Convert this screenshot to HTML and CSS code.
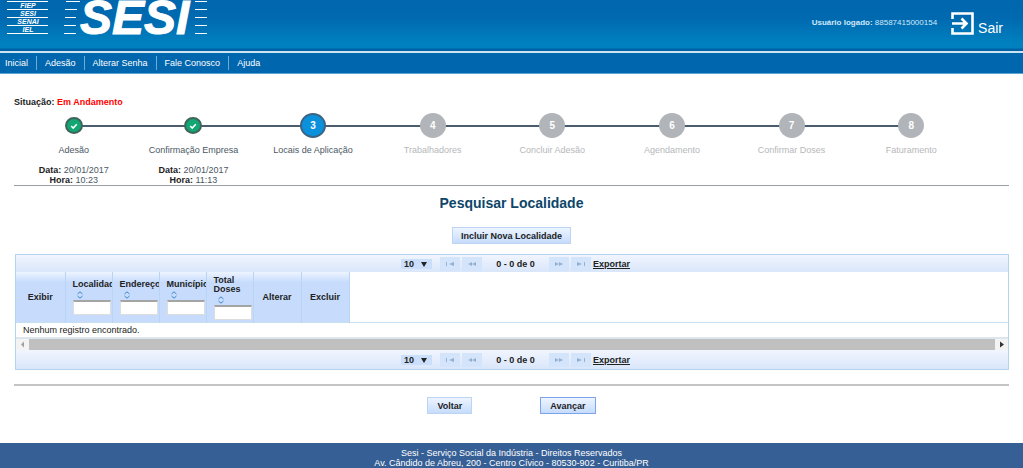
FILE: index.html
```html
<!DOCTYPE html>
<html lang="pt-BR">
<head>
<meta charset="utf-8">
<title>Pesquisar Localidade</title>
<link rel="stylesheet" href="styles.css">
</head>
<body>
<header class="header">
  <svg class="logo" width="210" height="38" viewBox="0 0 210 38" role="img" aria-label="FIEP SESI SENAI IEL">
    <path class="rules" d="M7 1.5h41M7 9.5h41M7 17.5h41M7 25.5h41M7 33.5h41M66 1.5h14M65 9.5h12M65 17.5h11M64 25.5h12M64 33.5h12M195 1.5h12M195 9.5h12M195 17.5h12M195 25.5h12M195 33.5h12"/>
    <g class="logo-small">
      <text x="28" y="8">FIEP</text>
      <text x="28" y="16">SESI</text>
      <text x="28" y="24">SENAI</text>
      <text x="28" y="32">IEL</text>
    </g>
    <text class="logo-big" x="80" y="34">SESI</text>
  </svg>
  <div class="user">
    <span><b>Usuário logado:</b> 88587415000154</span>
    <a class="exit" href="#">
      <svg width="23" height="23" viewBox="0 0 23 23" aria-hidden="true">
        <path d="M1.5 7V1.5H21.500V21.500H1.500V16M1 11.500H15M10.500 6.500L15.500 11.500L10.500 16.500" fill="none" stroke="#fff" stroke-width="2.600"/>
      </svg>
      <span>Sair</span>
    </a>
  </div>
</header>
<nav class="nav">
  <a href="#">Inicial</a><a href="#">Adesão</a><a href="#">Alterar Senha</a><a href="#">Fale Conosco</a><a href="#">Ajuda</a>
</nav>
<main class="main">
  <p class="status">Situação: <span class="red">Em Andamento</span></p>
  <ol class="steps">
    <li class="step done"><span class="dot"><svg width="8" height="8" viewBox="0 0 8 8" aria-hidden="true"><path d="M1.200 4L3.200 6L6.800 2.200" fill="none" stroke="#fff" stroke-width="1.600"/></svg></span><span class="label">Adesão</span><span class="when"><b>Data:</b> 20/01/2017<br><b>Hora:</b> 10:23</span></li>
    <li class="step done"><span class="dot"><svg width="8" height="8" viewBox="0 0 8 8" aria-hidden="true"><path d="M1.200 4L3.200 6L6.800 2.200" fill="none" stroke="#fff" stroke-width="1.600"/></svg></span><span class="label">Confirmação Empresa</span><span class="when"><b>Data:</b> 20/01/2017<br><b>Hora:</b> 11:13</span></li>
    <li class="step current"><span class="dot">3</span><span class="label">Locais de Aplicação</span></li>
    <li class="step"><span class="dot">4</span><span class="label">Trabalhadores</span></li>
    <li class="step"><span class="dot">5</span><span class="label">Concluir Adesão</span></li>
    <li class="step"><span class="dot">6</span><span class="label">Agendamento</span></li>
    <li class="step"><span class="dot">7</span><span class="label">Confirmar Doses</span></li>
    <li class="step"><span class="dot">8</span><span class="label">Faturamento</span></li>
  </ol>
  <h1 class="title">Pesquisar Localidade</h1>
  <div class="center"><button class="btn" type="button">Incluir Nova Localidade</button></div>
  <section class="panel">
    <div class="pager">
      <span class="rows"><select aria-label="Registros por página"><option>10</option></select></span>
      <span class="pair">
        <button type="button" class="pg" aria-label="Primeira"><svg width="8" height="6" viewBox="0 0 8 6"><path d="M0 1h1v4H0zM8 1v4L3 3z"/></svg></button>
        <button type="button" class="pg" aria-label="Anterior"><svg width="8" height="6" viewBox="0 0 8 6"><path d="M4 1v4L0 3zM8 1v4L4 3z"/></svg></button>
      </span>
      <span class="count">0 - 0 de 0</span>
      <span class="pair">
        <button type="button" class="pg" aria-label="Próxima"><svg width="8" height="6" viewBox="0 0 8 6"><path d="M0 1v4L4 3zM4 1v4L8 3z"/></svg></button>
        <button type="button" class="pg" aria-label="Última"><svg width="8" height="6" viewBox="0 0 8 6"><path d="M0 1v4L5 3zM7 1h1v4H7z"/></svg></button>
      </span>
      <a class="export" href="#">Exportar</a>
    </div>
    <table class="grid">
      <colgroup><col class="c-show"><col class="c-f"><col class="c-f"><col class="c-f"><col class="c-f"><col class="c-act"><col class="c-act"><col></colgroup>
      <thead>
        <tr>
          <th>Exibir</th>
          <th class="filter"><label for="f1">Localidade</label><svg class="sort" width="6" height="8" viewBox="0 0 6 8"><path d="M.5 3L3 .8L5.500 3M.5 5L3 7.200L5.500 5"/></svg><input id="f1" type="text"></th>
          <th class="filter"><label for="f2">Endereço</label><svg class="sort" width="6" height="8" viewBox="0 0 6 8"><path d="M.5 3L3 .8L5.500 3M.5 5L3 7.200L5.500 5"/></svg><input id="f2" type="text"></th>
          <th class="filter"><label for="f3">Município</label><svg class="sort" width="6" height="8" viewBox="0 0 6 8"><path d="M.5 3L3 .8L5.500 3M.5 5L3 7.200L5.500 5"/></svg><input id="f3" type="text"></th>
          <th class="filter"><label for="f4">Total<br>Doses</label><svg class="sort" width="6" height="8" viewBox="0 0 6 8"><path d="M.5 3L3 .8L5.500 3M.5 5L3 7.200L5.500 5"/></svg><input id="f4" type="text"></th>
          <th>Alterar</th>
          <th>Excluir</th>
          <td class="rest"></td>
        </tr>
      </thead>
      <tbody><tr><td class="empty" colspan="8">Nenhum registro encontrado.</td></tr></tbody>
    </table>
    <div class="scroll">
      <svg width="13" height="11" viewBox="0 0 13 11"><path d="M8 2.500v6L5 5.500z" fill="#a0a0a0"/></svg>
      <span class="thumb"></span>
      <svg width="13" height="11" viewBox="0 0 13 11"><path d="M5 2.500v6L9 5.500z" fill="#333"/></svg>
    </div>
    <div class="pager bottom">
      <span class="rows"><select aria-label="Registros por página"><option>10</option></select></span>
      <span class="pair">
        <button type="button" class="pg" aria-label="Primeira"><svg width="8" height="6" viewBox="0 0 8 6"><path d="M0 1h1v4H0zM8 1v4L3 3z"/></svg></button>
        <button type="button" class="pg" aria-label="Anterior"><svg width="8" height="6" viewBox="0 0 8 6"><path d="M4 1v4L0 3zM8 1v4L4 3z"/></svg></button>
      </span>
      <span class="count">0 - 0 de 0</span>
      <span class="pair">
        <button type="button" class="pg" aria-label="Próxima"><svg width="8" height="6" viewBox="0 0 8 6"><path d="M0 1v4L4 3zM4 1v4L8 3z"/></svg></button>
        <button type="button" class="pg" aria-label="Última"><svg width="8" height="6" viewBox="0 0 8 6"><path d="M0 1v4L5 3zM7 1h1v4H7z"/></svg></button>
      </span>
      <a class="export" href="#">Exportar</a>
    </div>
  </section>
  <div class="actions">
    <button class="btn" type="button">Voltar</button>
    <button class="btn primary" type="button">Avançar</button>
  </div>
</main>
<footer class="footer">Sesi - Serviço Social da Indústria - Direitos Reservados<br>Av. Cândido de Abreu, 200 - Centro Cívico - 80530-902 - Curitiba/PR</footer>
</body>
</html>
```

FILE: styles.css
```css
* { box-sizing: border-box; }

body {
  margin: 0;
  min-height: 100vh;
  display: flex;
  flex-direction: column;
  overflow-x: hidden;
  background: #fff;
  color: #222;
  font: 9px/10px "Liberation Sans", Arial, sans-serif;
}

button, input, select { font: inherit; margin: 0; }

.header {
  display: flex;
  justify-content: space-between;
  height: 51px;
  background: linear-gradient(#0067ae 0, #0069b0 18px, #0080bf 43px, #0080bf 48px, #0061a5 49px);
  color: #cfe8fa;
}
.logo { flex: none; overflow: visible; }
.rules { stroke: #fff; stroke-width: 1; }
.logo-small { fill: #fff; font: italic bold 7px "Liberation Sans", Arial, sans-serif; text-anchor: middle; }
.logo-big { fill: #fff; stroke: #fff; stroke-width: 1; font: italic bold 48px "Liberation Sans", Arial, sans-serif; }
.user {
  display: flex;
  align-items: center;
  gap: 14px;
  height: 46px;
  padding-right: 20px;
  font-size: 8px;
}
.exit {
  display: flex;
  align-items: center;
  gap: 4px;
  color: #fff;
  font-size: 14px;
  line-height: 16px;
  text-decoration: none;
}
.exit span { padding-top: 9px; }

.nav {
  display: flex;
  align-items: center;
  height: 23px;
  border-top: 2px solid #cbe4f3;
  border-bottom: 1px solid #5aa5d3;
  background: #0066ad;
}
.nav a {
  padding: 0 8px;
  border-left: 1px solid #6eaad3;
  color: #fff;
  line-height: 14px;
  text-decoration: none;
}
.nav a:first-child { padding-left: 5px; border-left: 0; }

.main { flex: 1; padding: 23px 14px 0; }
.status { margin: 0; font-weight: bold; }
.red { color: #f00; }

.steps {
  display: grid;
  grid-template-columns: repeat(8, 1fr);
  margin: 0;
  padding: 6px 38px 0 0;
  height: 79px;
  border-bottom: 1px solid #999fa4;
  list-style: none;
}
.step {
  position: relative;
  display: flex;
  flex-direction: column;
  align-items: center;
  color: #b5b8ba;
}
.step::before {
  content: "";
  position: absolute;
  top: 12px;
  left: 50%;
  width: 100%;
  border-top: 2px solid #4b5d6d;
}
.step:last-child::before { display: none; }
.dot {
  position: relative;
  z-index: 1;
  display: flex;
  align-items: center;
  justify-content: center;
  width: 26px;
  height: 25px;
  border-radius: 50%;
  background: #b1b5b9;
  color: #fff;
  font-size: 10px;
  font-weight: bold;
}
.current .dot { border: 2px solid #3c6382; background: #0b90dc; }
.done .dot { width: 18px; height: 17px; margin: 4px 0; border: 2px solid #40645c; background: #12a672; }
.label { margin-top: 7px; }
.done .label, .current .label { color: #4a5864; }
.when { margin-top: 10px; color: #4a5864; text-align: center; }
.when b { color: #222; }

.title { margin: 9px 0 16px; color: #0d4669; font-size: 14px; line-height: 16px; text-align: center; }
.center { display: flex; justify-content: center; }
.btn {
  height: 17px;
  padding: 0 8px;
  border: 1px solid #bdd5f5;
  background: linear-gradient(#edf4ff, #c6dcfc);
  color: #222;
  font-weight: bold;
}
.actions .btn { padding: 0 9px; }
.primary { border-color: #7ba4ec; }

.panel { margin: 10px 0 0 1px; border: 1px solid #b4d4ee; }
.pager {
  display: flex;
  align-items: center;
  height: 17px;
  padding-left: 385px;
  background: linear-gradient(#f1f5fe, #d9e6fa);
  font-weight: bold;
}
.bottom { height: 19px; }
.rows { position: relative; width: 31px; height: 10px; }
.rows select {
  display: block;
  width: 100%;
  height: 100%;
  padding: 0 3px;
  border: 0;
  appearance: none;
  background: #cbdffa;
  color: #222;
}
.rows::after {
  content: "";
  position: absolute;
  top: 3px;
  right: 5px;
  border: 3px solid transparent;
  border-top: 5px solid #222;
  border-bottom: 0;
  pointer-events: none;
}
.pair { display: flex; gap: 2px; margin-left: 8px; }
.pg {
  display: flex;
  align-items: center;
  justify-content: center;
  width: 20px;
  height: 14px;
  padding: 0;
  border: 0;
  background: #d3e4fb;
}
.pg svg { fill: #95b1cf; }
.count { width: 67px; text-align: center; }
.count + .pair { margin-left: 0; }
.export { margin-left: 2px; color: #222; }

.grid { width: 100%; border-collapse: collapse; table-layout: fixed; }
.c-show { width: 49px; }
.c-f { width: 47px; }
.c-act { width: 48px; }
.grid th {
  height: 50px;
  padding: 0;
  overflow: hidden;
  border-right: 1px solid #b9d5f5;
  background: linear-gradient(#edf4ff, #c7dcfd 10px);
  vertical-align: middle;
}
.grid th.filter { padding: 2px 0 0 7px; text-align: left; }
.filter label { display: block; white-space: nowrap; line-height: 9px; }
.sort { display: block; margin: 2px 0 1px 4px; fill: none; stroke: #3a87c8; }
.filter input {
  display: block;
  width: 38px;
  height: 15px;
  padding: 0 2px;
  border: 1px solid #ddd;
  border-top: 2px solid #a4a4a4;
  background: #fff;
}
.rest { padding: 0; }
.empty { height: 15px; padding: 0 7px; border-top: 1px solid #c7dff2; }

.scroll { display: flex; align-items: center; height: 13px; border-top: 2px solid #dce6ef; background: #f3f3f3; }
.scroll svg { flex: none; }
.thumb { flex: 1; height: 11px; background: #c0c0c0; }

.actions {
  display: flex;
  justify-content: center;
  gap: 68px;
  margin-top: 14px;
  padding: 11px 0 29px;
  border-top: 2px solid #c4c4c4;
}

.footer {
  padding: 5px 0 0;
  background: #365f96;
  color: #fff;
  text-align: center;
}
```
